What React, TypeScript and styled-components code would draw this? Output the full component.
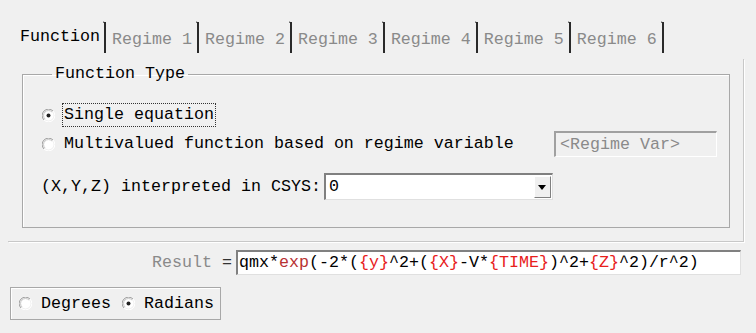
import styled, { createGlobalStyle } from 'styled-components';

const GlobalStyle = createGlobalStyle`
  html, body {
    margin: 0;
    padding: 0;
    background: #f0f0f0;
  }
  body {
    font-family: 'Liberation Mono', 'DejaVu Sans Mono', monospace;
    font-size: 16.67px;
    color: #000;
  }
`;

const tabs = ['Function', 'Regime 1', 'Regime 2', 'Regime 3', 'Regime 4', 'Regime 5', 'Regime 6'];

// formula pieces, kind decides the colour
const formula: { text: string; kind: 'plain' | 'func' | 'var' }[] = [
  { text: 'qmx*', kind: 'plain' },
  { text: 'exp', kind: 'func' },
  { text: '(-2*(', kind: 'plain' },
  { text: '{y}', kind: 'var' },
  { text: '^2+(', kind: 'plain' },
  { text: '{X}', kind: 'var' },
  { text: '-V*', kind: 'plain' },
  { text: '{TIME}', kind: 'var' },
  { text: ')^2+', kind: 'plain' },
  { text: '{Z}', kind: 'var' },
  { text: '^2)/r^2)', kind: 'plain' },
];

const Radio = ({ checked }: { checked?: boolean }) => (
  <RadioIcon width="13" height="13" viewBox="0 0 13 13">
    <path d="M2 11 A6 6 0 0 1 11 2" fill="none" stroke="#a0a0a0" strokeWidth="1" />
    <path d="M11 2 A6 6 0 0 1 2 11" fill="none" stroke="#ffffff" strokeWidth="1" />
    <circle cx="6.5" cy="6.5" r="5" fill="#fff" />
    <path d="M3 10 A4.5 4.5 0 0 1 10 3" fill="none" stroke="#c8c8c8" strokeWidth="1" />
    {checked ? <circle cx="6.5" cy="6.5" r="2" fill="#222" /> : null}
  </RadioIcon>
);

export default function App() {
  return (
    <Screen>
      <GlobalStyle />
      <TabStrip>
        {tabs.map((t, i) => (
          <Tab key={t} $active={i === 0}>
            {t}
          </Tab>
        ))}
      </TabStrip>
      <Page>
        <GroupBox>
          <Legend>Function Type</Legend>
          <OptionRow>
            <Radio checked />
            <Focused>Single equation</Focused>
          </OptionRow>
          <OptionRow>
            <Radio />
            <OptionText>Multivalued function based on regime variable</OptionText>
            <RegimeVar>&lt;Regime Var&gt;</RegimeVar>
          </OptionRow>
          <CsysRow>
            <span>(X,Y,Z) interpreted in CSYS:</span>
            <Combo>
              <ComboValue>0</ComboValue>
              <DropButton>
                <svg width="8" height="5" viewBox="0 0 8 5">
                  <path d="M0 0 H8 L4 5 Z" fill="#000" />
                </svg>
              </DropButton>
            </Combo>
          </CsysRow>
        </GroupBox>
      </Page>
      <ResultRow>
        <ResultLabel>
          Result <Equals>=</Equals>
        </ResultLabel>
        <ResultField>
          {formula.map((f, i) => (
            <Piece key={i} $kind={f.kind}>
              {f.text}
            </Piece>
          ))}
        </ResultField>
      </ResultRow>
      <AngleBox>
        <Radio />
        <AngleText>Degrees</AngleText>
        <Radio checked />
        <AngleText>Radians</AngleText>
      </AngleBox>
    </Screen>
  );
}

const Screen = styled.div`
  width: 756px;
  height: 333px;
  padding-top: 22px;
  box-sizing: border-box;
  overflow: hidden;
`;

const TabStrip = styled.div`
  display: flex;
  padding-left: 20px;
  height: 31px;
`;

const Tab = styled.div<{ $active?: boolean }>`
  position: relative;
  height: 31px;
  line-height: 20px;
  box-sizing: border-box;
  padding: ${(p) => (p.$active ? '5px 4px 0 0' : '8px 5px 0 6px')};
  color: ${(p) => (p.$active ? '#000' : '#8a8a8a')};
  white-space: pre;
  border-right: 2px solid #2a2a2a;
  &::after {
    content: '';
    position: absolute;
    right: -2px;
    top: 0;
    width: 3px;
    height: 2px;
    border-top: 1px solid #2a2a2a;
    transform: skewY(20deg);
  }
`;

const Page = styled.div`
  margin: 6px 12px 0 8px;
  border-right: 1px solid #c8c8c8;
  border-bottom: 1px solid #c8c8c8;
  box-shadow: 1px 1px 0 #ffffff;
  padding: 5px 13px 13px 14px;
`;

const GroupBox = styled.fieldset`
  margin: 0;
  padding: 19px 12px 27px 18px;
  border: 1px solid #a8a8a8;
  box-shadow: inset 1px 1px 0 #fff;
  display: flex;
  flex-direction: column;
  gap: 4px;
`;

const Legend = styled.legend`
  margin-left: 11px;
  padding: 0 3px;
  line-height: 20px;
`;

const OptionRow = styled.div`
  display: flex;
  align-items: center;
  min-height: 24px;
  white-space: pre;
`;

const RadioIcon = styled.svg`
  flex: none;
  margin: 0 9px 0 1px;
`;

const Focused = styled.span`
  border: 1px dotted #333;
  padding: 1px 1px;
  line-height: 20px;
  margin-left: -2px;
`;

const OptionText = styled.span`
  line-height: 20px;
`;

const RegimeVar = styled.div`
  margin-left: auto;
  width: 163px;
  height: 26px;
  box-sizing: border-box;
  border-top: 2px solid #a0a0a0;
  border-left: 2px solid #a0a0a0;
  border-bottom: 1px solid #fff;
  border-right: 1px solid #fff;
  padding-left: 4px;
  color: #8a8a8a;
  line-height: 23px;
`;

const CsysRow = styled.div`
  display: flex;
  align-items: center;
  margin-top: 12px;
  white-space: pre;
`;

const Combo = styled.div`
  margin-left: 3px;
  width: 229px;
  height: 27px;
  box-sizing: border-box;
  display: flex;
  align-items: center;
  background: #fff;
  border-top: 2px solid #808080;
  border-left: 2px solid #808080;
  border-bottom: 1px solid #e0e0e0;
  border-right: 1px solid #e0e0e0;
`;

const ComboValue = styled.span`
  flex: 1;
  padding-left: 3px;
  line-height: 22px;
`;

const DropButton = styled.div`
  width: 17px;
  height: 22px;
  box-sizing: border-box;
  display: flex;
  align-items: center;
  justify-content: center;
  background: #f0f0f0;
  border-top: 1px solid #fff;
  border-left: 1px solid #fff;
  border-right: 1px solid #808080;
  border-bottom: 1px solid #808080;
  margin-right: 1px;
`;

const ResultRow = styled.div`
  display: flex;
  align-items: center;
  margin: 8px 15px 0 152px;
`;

const ResultLabel = styled.span`
  color: #8a8a8a;
  white-space: pre;
  margin-right: 4px;
`;

const Equals = styled.span`
  color: #333;
`;

const ResultField = styled.div`
  flex: 1;
  height: 25px;
  box-sizing: border-box;
  background: #fff;
  border-top: 2px solid #808080;
  border-left: 2px solid #808080;
  border-bottom: 1px solid #e0e0e0;
  border-right: 1px solid #e0e0e0;
  padding-left: 1px;
  line-height: 22px;
  white-space: pre;
`;

const Piece = styled.span<{ $kind: 'plain' | 'func' | 'var' }>`
  color: ${(p) => (p.$kind === 'func' ? '#b83232' : p.$kind === 'var' ? '#e8201c' : '#000')};
`;

const AngleBox = styled.div`
  margin: 12px 0 0 10px;
  width: 211px;
  height: 33px;
  box-sizing: border-box;
  display: flex;
  align-items: center;
  padding-left: 7px;
  border: 1px solid #a8a8a8;
  box-shadow: inset 1px 1px 0 #fff;
  white-space: pre;
`;

const AngleText = styled.span`
  margin-right: 10px;
  line-height: 20px;
`;
